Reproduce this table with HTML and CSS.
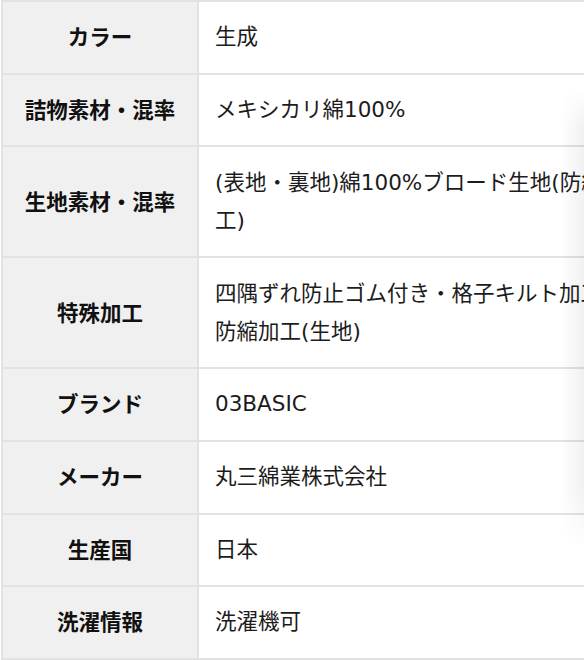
FILE: index.html
```html
<!DOCTYPE html>
<html lang="ja">
<head>
<meta charset="utf-8">
<title>商品仕様</title>
<link rel="stylesheet" href="styles.css">
</head>
<body>
<div class="spec-wrap">
  <table class="spec-table">
    <tbody>
      <tr><th>カラー</th><td>生成</td></tr>
      <tr><th>詰物素材・混率</th><td>メキシカリ綿100%</td></tr>
      <tr><th>生地素材・混率</th><td>(表地・裏地)綿100%ブロード生地(防縮加工)</td></tr>
      <tr><th>特殊加工</th><td>四隅ずれ防止ゴム付き・格子キルト加工・防縮加工(生地)</td></tr>
      <tr><th>ブランド</th><td>03BASIC</td></tr>
      <tr><th>メーカー</th><td>丸三綿業株式会社</td></tr>
      <tr><th>生産国</th><td>日本</td></tr>
      <tr><th>洗濯情報</th><td>洗濯機可</td></tr>
    </tbody>
  </table>
</div>
</body>
</html>
```
FILE: styles.css
```css
html, body {
  margin: 0;
  padding: 0;
  background: #ffffff;
}

body {
  font-family: "Noto Sans", "Noto Sans CJK JP", sans-serif;
  color: #222222;
}

.spec-wrap {
  position: relative;
  width: 100%;
  overflow: hidden;
}

.spec-wrap::after {
  content: "";
  position: absolute;
  right: 0;
  top: 88px;
  width: 24px;
  height: 460px;
  background: linear-gradient(to right, rgba(0, 0, 0, 0), rgba(0, 0, 0, 0.055));
  -webkit-mask-image: linear-gradient(to bottom, transparent 0, #000 40px, #000 400px, transparent 460px);
  mask-image: linear-gradient(to bottom, transparent 0, #000 40px, #000 400px, transparent 460px);
  pointer-events: none;
}

.spec-table {
  margin-left: 1px;
  width: 648px;
  border-collapse: separate;
  border-spacing: 0;
  border-top: 2px solid #e2e2e2;
  border-left: 2px solid #e2e2e2;
  font-size: 21.5px;
  line-height: 38.3px;
  table-layout: fixed;
}

.spec-table th,
.spec-table td {
  border-right: 2px solid #e2e2e2;
  border-bottom: 2px solid #e2e2e2;
  padding: 16.2px 16px;
  vertical-align: middle;
}

.spec-table th {
  box-sizing: border-box;
  width: 196px;
  padding-left: 6px;
  padding-right: 6px;
  background: #f0f0f0;
  font-weight: 700;
  text-align: center;
  color: #111111;
  white-space: nowrap;
}

.spec-table td {
  font-family: "DejaVu Sans", "Noto Sans CJK JP", sans-serif;
  text-align: left;
  font-weight: 400;
  color: #1c1c1c;
}
```
